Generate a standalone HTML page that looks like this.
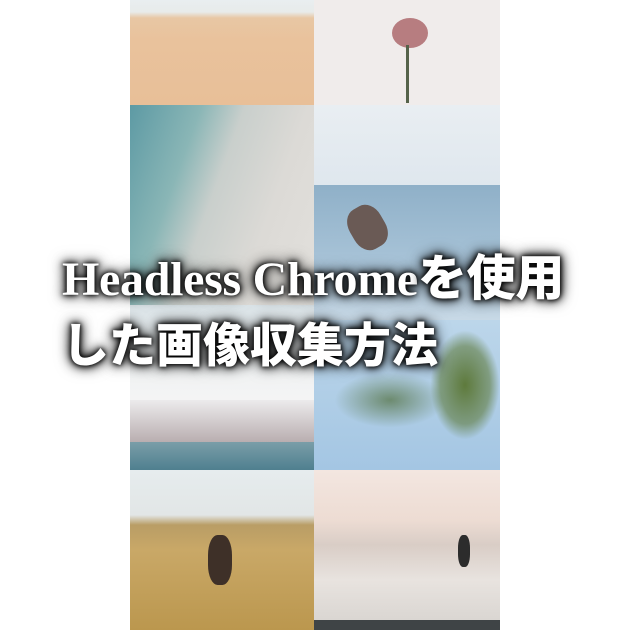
<!DOCTYPE html>
<html><head><meta charset="utf-8"><style>
html,body{margin:0;padding:0}
body{width:630px;height:630px;background:#fff;position:relative;overflow:hidden}
.p{position:absolute}
.t{position:absolute;left:62px;color:#fff;font-weight:bold;white-space:nowrap;
text-shadow:0 0 4px #000,0 0 8px #000,0 0 12px rgba(0,0,0,.8),0 0 16px rgba(0,0,0,.6);}
</style></head><body>
<!-- left column -->
<div class="p" style="left:130px;top:0;width:184px;height:105px;background:linear-gradient(#e9eef0 0,#e8ebea 12px,#e8c7a4 18px,#e9c29c 40px,#e8bf98 105px)"></div>
<div class="p" style="left:130px;top:105px;width:184px;height:200px;background:linear-gradient(110deg,#5d9aa4 0,#8ab6b6 28%,#c9cfcc 45%,#dcdad6 70%,#e2e0dc 100%)"></div>
<div class="p" style="left:130px;top:305px;width:184px;height:95px;background:linear-gradient(#dbe4e8,#eef1f2 50%,#f4f4f4)"></div>
<div class="p" style="left:130px;top:400px;width:184px;height:42px;background:linear-gradient(#ecebec,#b9aeb0)"></div>
<div class="p" style="left:130px;top:442px;width:184px;height:28px;background:linear-gradient(#7a9ea8,#4f7f8f)"></div>
<div class="p" style="left:130px;top:470px;width:184px;height:160px;background:linear-gradient(#e6ecee 0,#e2e6e6 45px,#b99d66 55px,#c9a867 80px,#bb974e 160px)"></div>
<div class="p" style="left:208px;top:535px;width:24px;height:50px;background:#3e3028;border-radius:40%"></div>
<!-- right column -->
<div class="p" style="left:314px;top:0;width:186px;height:105px;background:#f0eceb"></div>
<div class="p" style="left:392px;top:18px;width:36px;height:30px;background:#b77d80;border-radius:50%"></div>
<div class="p" style="left:406px;top:45px;width:3px;height:58px;background:#55624a"></div>
<div class="p" style="left:314px;top:105px;width:186px;height:80px;background:linear-gradient(#e9eef2,#dfe7ee)"></div>
<div class="p" style="left:314px;top:185px;width:186px;height:135px;background:linear-gradient(#8fb0c8,#a9c4d8 60%,#c8d9e6)"></div>
<div class="p" style="left:350px;top:205px;width:35px;height:45px;background:#6a5a55;border-radius:40%;transform:rotate(-30deg)"></div>
<div class="p" style="left:314px;top:320px;width:186px;height:150px;background:linear-gradient(#bcd6ea,#a4c6e3)"></div>
<div class="p" style="left:430px;top:330px;width:70px;height:110px;background:radial-gradient(#5e7a3c,rgba(94,122,60,.6) 50%,transparent 70%)"></div>
<div class="p" style="left:330px;top:370px;width:120px;height:60px;background:radial-gradient(rgba(80,110,60,.7),transparent 65%)"></div>
<div class="p" style="left:314px;top:470px;width:186px;height:150px;background:linear-gradient(#f3e6e0,#eddcd3 50px,#d9cdc6 75px,#e8e3df 110px,#dad6d2 150px)"></div>
<div class="p" style="left:458px;top:535px;width:12px;height:32px;background:#2c2c2c;border-radius:40%"></div>
<div class="p" style="left:314px;top:620px;width:186px;height:10px;background:#3f4446"></div>
<!-- text -->
<div class="t" style="top:250px;font-size:48px;line-height:50px;font-family:'Liberation Serif','Noto Sans CJK JP',serif;letter-spacing:-0.3px">Headless Chrome<span style="font-family:'Noto Sans CJK JP',sans-serif;font-size:49px;font-weight:900">を使用</span></div>
<div class="t" style="top:318px;font-size:47px;line-height:56px;font-family:'Liberation Sans','Noto Sans CJK JP',sans-serif;font-weight:900">した画像収集方法</div>
</body></html>
